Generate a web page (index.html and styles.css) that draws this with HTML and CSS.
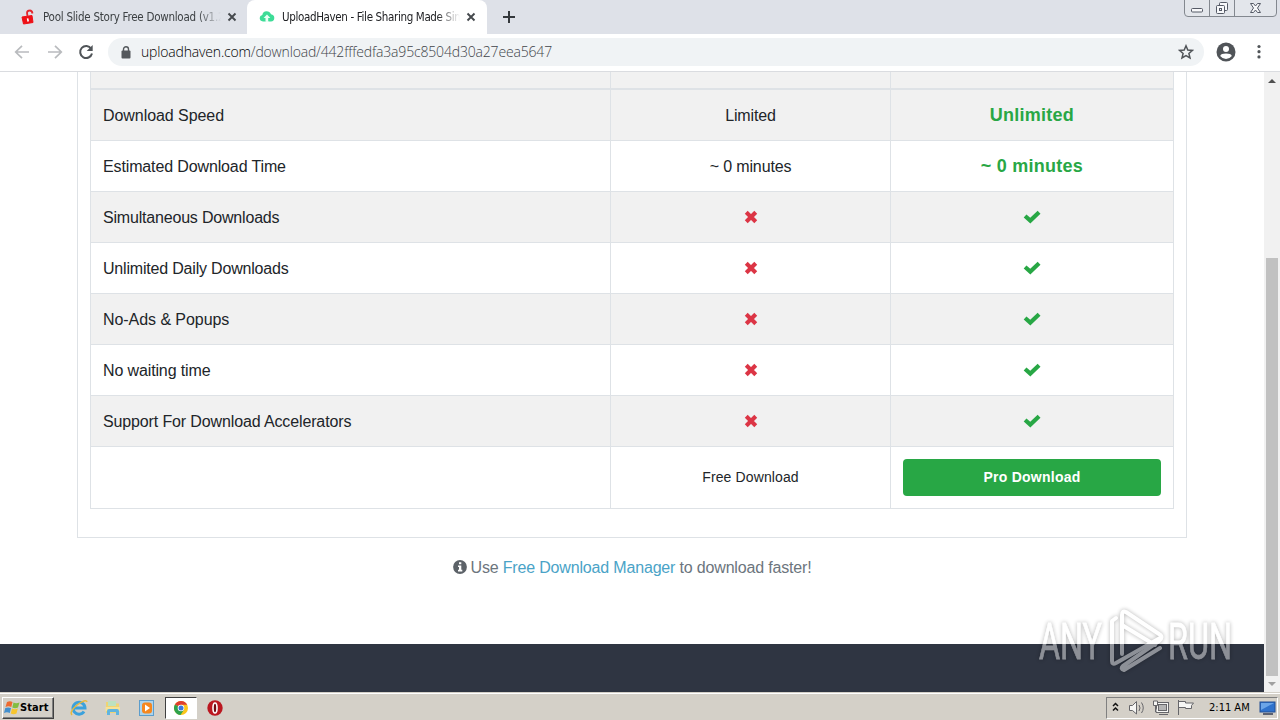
FILE: index.html
```html
<!DOCTYPE html>
<html lang="en">
<head>
    <meta charset="UTF-8">
    <title>UploadHaven - File Sharing Made Simple</title>
    <link rel="stylesheet" href="styles.css">
</head>
<body>
    <svg width="0" height="0" class="defs">
        <symbol id="times" viewBox="0 0 14 14"><path d="M3.7 3.7L10.3 10.3M10.3 3.7L3.7 10.3" stroke="#dc3545" stroke-width="4.1" stroke-linecap="square"/></symbol>
        <symbol id="check" viewBox="0 0 18 14"><path d="M3.6 7.3L7.3 10.6L14.6 3.6" fill="none" stroke="#28a745" stroke-width="4.1" stroke-linecap="square"/></symbol>
        <symbol id="close" viewBox="0 0 10 10"><path d="M1.500 1.500L8.500 8.500M8.500 1.500L1.500 8.500" stroke="#45494d" stroke-width="1.900"/></symbol>
    </svg>

    <!-- Tabs -->
    <div class="tabs">
        <div class="tab">
            <svg class="favicon" width="16" height="16" viewBox="0 0 16 16"><path d="M2 8L12 6.500L13 13.500L3.500 15Z" fill="#ee1016" stroke="#ee1016" stroke-linejoin="round"/><path d="M7.500 7L7 4Q7 1.500 9.500 1.500Q12 1.300 12.500 4.500" fill="none" stroke="#e5252b" stroke-width="1.800"/><path d="M7.600 9.300L8.200 12.500" stroke="#fff" stroke-width="1.600"/></svg>
            <span class="tab-title t1">Pool Slide Story Free Download (v1.2</span>
            <svg class="close" width="10" height="10"><use href="#close"/></svg>
        </div>
        <div class="tab active">
            <svg class="favicon" width="16" height="16" viewBox="0 0 16 16"><path d="M4 12.500Q.7 12 .7 9Q.7 6.500 3.300 6Q3.800 2.200 7.500 2.200Q10.800 2.200 12 5.200Q15.300 5.800 15.300 9Q15.200 12.300 12 12.500Z" fill="#3ddc97"/><path d="M8 5.500L11.300 9H9.200V12Q9.200 13 10.500 13H7Q6.500 13 6.500 12V9H4.600Z" fill="#e9fff5"/></svg>
            <span class="tab-title t2">UploadHaven - File Sharing Made Sim</span>
            <svg class="close" width="10" height="10"><use href="#close"/></svg>
        </div>
        <svg class="new-tab" width="12" height="12" viewBox="0 0 12 12"><path d="M6 0V12M0 6H12" stroke="#34383c" stroke-width="2"/></svg>
        <svg class="window-buttons" width="94" height="18" viewBox="0 0 94 18"><path d="M.5 0V13Q.5 16.500 4 16.500H89Q92.500 16.500 92.500 13V0M25.500 0V16.500M50.500 0V16.500" fill="#e3e6eb" stroke="#83888f"/><g fill="#f7f8fa" stroke="#555a66"><rect x="7.500" y="8.500" width="11" height="3.500" rx="1"/><rect x="35.500" y="2.500" width="8" height="8" rx="1"/><rect x="32.500" y="5.500" width="8" height="8" rx="1"/><rect x="35.500" y="8.500" width="2" height="2"/><path d="M66.500 3.500H69.500L71.500 6L73.500 3.500H76.500L73.500 8L76.500 12.500H73.500L71.500 10L69.500 12.500H66.500L69.500 8Z"/></g></svg>
    </div>

    <!-- Toolbar -->
    <div class="toolbar">
        <svg class="nav" width="66" height="20" viewBox="0 0 66 20"><path d="M17 10H4M10 3.800L3.700 10L10 16.200M36 10H49M43 3.800L49.300 10L43 16.200" fill="none" stroke="#b9bbbe" stroke-width="1.700"/></svg>
        <svg class="reload" width="16" height="16" viewBox="0 0 16 16"><path d="M13.200 4.700A6 6 0 1 0 14 9.500" fill="none" stroke="#505458" stroke-width="2"/><path d="M14.700 1V7H8.700Z" fill="#505458"/></svg>
        <div class="address">
            <svg class="lock" width="10" height="13" viewBox="0 0 10 13"><rect x=".5" y="4.500" width="9" height="8" rx="1" fill="#54585c"/><path d="M2.500 5V3.300A2.500 2.500 0 0 1 7.500 3.300V5" fill="none" stroke="#54585c" stroke-width="1.400"/></svg>
            <span class="url"><b>uploadhaven.com</b>/download/442fffedfa3a95c8504d30a27eea5647</span>
            <svg class="star" width="16" height="16" viewBox="0 0 16 16"><path d="M8 1.800L9.800 6L14.400 6.400L10.900 9.400L12 13.900L8 11.500L4 13.900L5.100 9.400L1.600 6.400L6.200 6Z" fill="none" stroke="#505458" stroke-width="1.500"/></svg>
        </div>
        <svg class="avatar" width="20" height="20" viewBox="0 0 20 20"><circle cx="10" cy="10" r="9.500" fill="#505458"/><circle cx="10" cy="7" r="3" fill="#fff"/><path d="M4.200 14Q5 11.600 10 11.600T15.800 14Q13.500 17 10 17T4.200 14Z" fill="#fff"/></svg>
        <svg class="menu" width="4" height="16" viewBox="0 0 4 16"><g fill="#505458"><circle cx="2" cy="2.500" r="1.600"/><circle cx="2" cy="7.700" r="1.600"/><circle cx="2" cy="12.900" r="1.600"/></g></svg>
    </div>

    <!-- Page -->
    <div class="viewport">
        <div class="page">
            <div class="card">
                <table class="compare">
                    <colgroup><col class="feature"><col class="free"><col class="pro"></colgroup>
                    <tr class="head"><th></th><th></th><th></th></tr>
                    <tr class="odd"><td class="snug">Download Speed</td><td>Limited</td><td class="strong">Unlimited</td></tr>
                    <tr><td>Estimated Download Time</td><td>~ 0 minutes</td><td class="strong">~ 0 minutes</td></tr>
                    <tr class="odd"><td class="tight">Simultaneous Downloads</td><td><svg width="14" height="14"><use href="#times"/></svg></td><td><svg width="18" height="14"><use href="#check"/></svg></td></tr>
                    <tr><td class="tight">Unlimited Daily Downloads</td><td><svg width="14" height="14"><use href="#times"/></svg></td><td><svg width="18" height="14"><use href="#check"/></svg></td></tr>
                    <tr class="odd"><td class="snug">No-Ads &amp; Popups</td><td><svg width="14" height="14"><use href="#times"/></svg></td><td><svg width="18" height="14"><use href="#check"/></svg></td></tr>
                    <tr><td>No waiting time</td><td><svg width="14" height="14"><use href="#times"/></svg></td><td><svg width="18" height="14"><use href="#check"/></svg></td></tr>
                    <tr class="odd"><td>Support For Download Accelerators</td><td><svg width="14" height="14"><use href="#times"/></svg></td><td><svg width="18" height="14"><use href="#check"/></svg></td></tr>
                    <tr class="actions"><td></td><td><a class="free-link">Free Download</a></td><td><a class="pro-button">Pro Download</a></td></tr>
                </table>
            </div>
            <div class="hint">
                <svg width="14" height="14" viewBox="0 0 14 14"><circle cx="7" cy="7" r="6.900" fill="#5c6268"/><path d="M6 2.300H8.300V4.300H6ZM5 5.500H8.300V9.700H9.300V11.400H5V9.700H6V7.100H5Z" fill="#fff"/></svg>
                <span>Use <a>Free Download Manager</a> to download faster!</span>
            </div>
            <div class="footer"></div>
        </div>
        <div class="scrollbar">
            <svg width="16" height="18" viewBox="0 0 16 18"><path d="M4 11L8 7L12 11Z" fill="#505050"/></svg>
            <div class="thumb"></div>
            <svg width="16" height="16" viewBox="0 0 16 16"><path d="M4 6L8 10L12 6Z" fill="#a0a0a0"/></svg>
        </div>
        <svg class="watermark" width="210" height="76" viewBox="0 0 210 76">
            <g font-family="Roboto, sans-serif" font-size="50" fill="#fff" stroke="#fff" stroke-width=".8">
                <text x="3" y="54" textLength="63" lengthAdjust="spacingAndGlyphs">ANY</text>
                <text x="132" y="54" textLength="64" lengthAdjust="spacingAndGlyphs">RUN</text>
            </g>
            <g fill="none" stroke="#fff" stroke-width="4" stroke-linejoin="round" stroke-linecap="round">
                <path d="M80 13L76 16V56Q76 60 80 58L124 33"/>
                <path d="M86 49V10Q86 5 90 7L123 29Q128 32 123 36L87 61Q84 64 88 65L124 43"/>
                <path d="M86 20L119 40"/>
            </g>
        </svg>
    </div>

    <!-- Taskbar -->
    <div class="taskbar">
        <div class="start">
            <svg width="16" height="16" viewBox="0 0 16 16"><path d="M3 2Q6 .3 8.500 2L7.300 7Q4.500 5.500 1.500 7Z" fill="#ee6a30"/><path d="M9.500 2.500Q12 4 15.500 2.500L14 7.500Q11 9 8.300 7.500Z" fill="#83bd42"/><path d="M1.300 8Q4 6.800 7 8L5.800 13Q3 11.500 0 13Z" fill="#438fce"/><path d="M8 8.500Q11 10 13.800 8.500L12.500 13.500Q9.500 15 6.800 13.500Z" fill="#f7c52e"/></svg>
            <span>Start</span>
        </div>
        <div class="launch">
            <svg width="18" height="18" viewBox="0 0 18 18"><path d="M14 12.500A6 6 0 1 1 15 9H4" fill="none" stroke="#3ba1dc" stroke-width="3"/><path d="M2 16Q-1 13 7 6Q16-.5 17 3" fill="none" stroke="#e9b93b" stroke-width="1.500"/></svg>
            <svg width="18" height="18" viewBox="0 0 18 18"><path d="M2 3H7L8 4.500H15V14H2Z" fill="#efd474"/><path d="M4 2H12V7H4Z" fill="#bce1c0"/><path d="M1.500 8H16V12H1.500Z" fill="#f6e298"/><path d="M3 16V12Q3 10 5 10H13Q15 10 15 12V16H12V13H6V16Z" fill="#60b4df"/></svg>
            <svg width="18" height="18" viewBox="0 0 18 18"><rect x="1.500" y="1.500" width="14" height="15" fill="#acd4ed" stroke="#5c9dcc"/><rect x="4" y="3.500" width="10" height="11" rx="3" fill="#f5871f"/><path d="M7 5.500L12 9L7 12.500Z" fill="#fff"/></svg>
            <div class="running">
                <svg width="16" height="16" viewBox="0 0 16 16"><circle cx="8" cy="8" r="7" fill="#fbc51b"/><path d="M8 8L1.900 4.500A7 7 0 0 1 14.200 4.700H8Z" fill="#df3e30"/><path d="M1.900 4.500A7 7 0 0 0 7.500 15L11 9.700L8 8Z" fill="#2ea24c"/><circle cx="8" cy="8" r="3.300" fill="#fff"/><circle cx="8" cy="8" r="2.500" fill="#3b78dc"/></svg>
            </div>
            <svg width="18" height="18" viewBox="0 0 18 18"><circle cx="9" cy="9" r="7.700" fill="#bb1720"/><ellipse cx="9" cy="9" rx="2" ry="5" fill="#700b12" stroke="#fff" stroke-width="1.600"/></svg>
        </div>
        <div class="tray">
            <svg width="90" height="20" viewBox="0 0 90 20">
                <path d="M6 8L8.500 5.500L11 8M6 12.500L8.500 10L11 12.500" fill="none" stroke="#111" stroke-width="1.500"/>
                <g fill="#f6f6f4" stroke="#66666a"><path d="M22.500 7.500H25.500L29.500 3.500V16L25.500 12.500H22.500Z"/><path d="M32 7Q34 10 32 13M34.500 4.500Q38 10 34.500 15" fill="none"/>
                <rect x="49.500" y="4.500" width="12" height="10"/><rect x="51.500" y="6.500" width="8" height="6" fill="#b5b5b5"/><path d="M52 16.500H61M46.500 3V7.500H50.500V3ZM48.500 8V14H50"/>
                <path d="M71.500 17V2M71.500 3.500H78.500V5H86.500L84.500 7.500V10.500H78.500V9.500H71.500Z"/></g>
            </svg>
            <span class="clock">2:11 AM</span>
            <svg class="desktop" width="18" height="14" viewBox="0 0 18 14"><rect x="1" y="1" width="15" height="10" fill="#2f72cc" stroke="#234f94"/><path d="M2 2H15L2 9Z" fill="#6ba5e8"/><path d="M4 13H14" stroke="#333d55" stroke-width="1.500"/></svg>
        </div>
    </div>
</body>
</html>
```

FILE: styles.css
```css
* {
    box-sizing: border-box;
}

body {
    margin: 0;
    width: 1280px;
    height: 720px;
    overflow: hidden;
    display: flex;
    flex-direction: column;
    background: #fff;
    font-family: "Liberation Sans", Arial, sans-serif;
    font-size: 16px;
    color: #212529;
}

svg {
    display: block;
    flex: none;
}

.defs {
    position: absolute;
}

.tabs {
    height: 34px;
    flex: none;
    display: flex;
    background: #dee1e8;
    font: 11.5px "DejaVu Sans Condensed", "DejaVu Sans", sans-serif;
    font-stretch: condensed;
    color: #3c4043;
}

.tab {
    width: 247px;
    height: 34px;
    display: flex;
    align-items: center;
    padding: 0 10px 0 20px;
}

.tab.active {
    width: 240px;
    padding: 0 11px 0 12px;
    background: #fff;
    border-radius: 8px 8px 0 0;
    color: #202124;
}

.tab-title {
    width: 178px;
    margin: 0 auto 0 7px;
    white-space: nowrap;
    letter-spacing: -0.25px;
    -webkit-mask-image: linear-gradient(to right, #000 155px, transparent);
    mask-image: linear-gradient(to right, #000 155px, transparent);
}

.t2 {
    letter-spacing: -0.35px;
}

.new-tab {
    margin: 11px 0 0 16px;
}

.window-buttons {
    margin: 0 2px 0 auto;
}

.toolbar {
    height: 38px;
    flex: none;
    display: flex;
    align-items: center;
    padding: 0 19px 1px 12px;
    border-bottom: 1px solid #dadce0;
}

.reload {
    margin-right: 14px;
}

.address {
    width: 1096px;
    height: 28px;
    display: flex;
    align-items: center;
    padding: 0 10px 0 13px;
    border-radius: 14px;
    background: #f0f3f5;
}

.url {
    margin: 0 auto 0 10px;
    font-family: "Open Sans", sans-serif;
    font-weight: 300;
    font-size: 14px;
    line-height: 18px;
    letter-spacing: -0.17px;
    color: #3f4449;
}

.url b {
    font-weight: 300;
    color: #000;
}

.avatar {
    margin-left: 12px;
}

.menu {
    margin-left: auto;
}

.viewport {
    position: relative;
    height: 620px;
    flex: none;
    display: flex;
}

.page {
    width: 1264px;
    display: flex;
    flex-direction: column;
}

.card {
    width: 1110px;
    height: 466px;
    margin: 0 auto;
    padding: 0 12px;
    border: 1px solid #dee2e6;
    border-top: 0;
}

.compare {
    width: 1084px;
    table-layout: fixed;
    border-collapse: separate;
    border-spacing: 0;
    border-left: 1px solid #dee2e6;
    letter-spacing: -0.13px;
}

.feature {
    width: 520px;
}

.free {
    width: 280px;
}

.pro {
    width: 283px;
}

.compare td,
.compare th {
    height: 51px;
    padding: 2px 12px 0;
    border: 1px solid #dee2e6;
    border-width: 0 1px 1px 0;
    text-align: center;
    white-space: nowrap;
}

.compare td:first-child {
    text-align: left;
}

.compare td svg {
    margin: -2px auto 0;
}

.compare .head th {
    height: 18px;
    border-bottom-width: 2px;
    background: #f1f1f1;
}

.odd td {
    background: #f1f1f1;
}

.compare .snug {
    letter-spacing: -0.06px;
}

.compare .tight {
    letter-spacing: -0.19px;
}

.compare .actions td {
    height: 62px;
    padding-top: 0;
    font-size: 14px;
}

.compare .strong {
    padding-top: 0;
    font-size: 18px;
    font-weight: bold;
    letter-spacing: 0.25px;
    color: #28a745;
}

.free-link {
    display: block;
    margin-top: -1px;
    letter-spacing: 0.12px;
}

.pro-button {
    display: block;
    height: 37px;
    border-radius: 4px;
    background: #28a745;
    color: #fff;
    font-weight: bold;
    line-height: 37px;
    letter-spacing: 0.25px;
}

.hint {
    display: flex;
    align-items: center;
    justify-content: center;
    gap: 4px;
    height: 20px;
    margin-top: 19px;
    letter-spacing: -0.17px;
    color: #6c757d;
}

.hint span {
    padding-top: 2px;
}

.hint a {
    color: #4aa3c7;
}

.footer {
    height: 48px;
    margin-top: auto;
    background: #2f3542;
}

.scrollbar {
    width: 16px;
    display: flex;
    flex-direction: column;
    align-items: center;
    background: #f1f1f1;
}

.thumb {
    width: 12px;
    height: 418px;
    margin-top: auto;
    background: #c1c1c1;
}

.watermark {
    position: absolute;
    left: 1036px;
    top: 533px;
    opacity: 0.45;
    filter: drop-shadow(0 0 2px rgba(0, 0, 0, 0.65));
}

.taskbar {
    height: 28px;
    flex: none;
    display: flex;
    align-items: center;
    padding: 2px 2px 0;
    border-top: 1px solid #d4d0c8;
    box-shadow: inset 0 1px #fff;
    background: #d4d0c8;
    font: 11px "DejaVu Sans Condensed", "DejaVu Sans", sans-serif;
    font-stretch: condensed;
    color: #000;
}

.start {
    width: 52px;
    height: 22px;
    display: flex;
    align-items: center;
    padding-left: 1px;
    border: 1px solid;
    border-color: #fff #404040 #404040 #fff;
    box-shadow: inset -1px -1px #808080;
    font-weight: bold;
    letter-spacing: 0.1px;
}

.launch {
    display: flex;
    align-items: center;
    gap: 16px;
    margin-left: 16px;
}

.running {
    width: 32px;
    height: 22px;
    display: flex;
    align-items: center;
    justify-content: center;
    margin: 0 -7px;
    border: 1px solid;
    border-color: #404040 #fff #fff #404040;
    background: #fff;
}

.tray {
    width: 172px;
    height: 22px;
    display: flex;
    align-items: center;
    margin-left: auto;
    border: 1px solid;
    border-color: #808080 #fff #fff #808080;
}

.clock {
    margin-left: 12px;
    white-space: nowrap;
}

.desktop {
    margin: 0 0 0 auto;
}
```
